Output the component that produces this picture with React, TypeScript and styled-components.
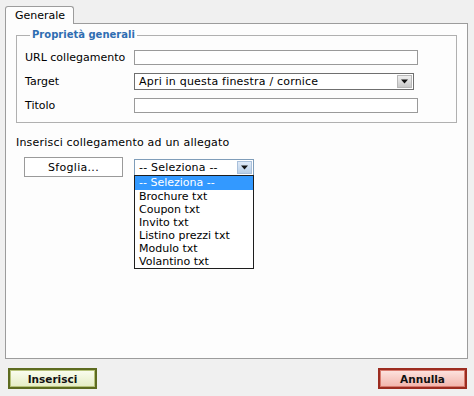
import React from "react";
import styled, { createGlobalStyle } from "styled-components";

const Global = createGlobalStyle`
  html, body { margin: 0; padding: 0; background: #f0f0f0; }
  body { font-family: "DejaVu Sans", Verdana, sans-serif; font-size: 11px; color: #000; }
  * { box-sizing: border-box; }
`;

const Page = styled.div`
  width: 474px;
  height: 396px;
  padding: 6px 6px 0 5px;
  display: flex;
  flex-direction: column;
`;

const TabBar = styled.div`
  display: flex;
  height: 17px;
`;

const Tab = styled.div`
  width: 69px;
  height: 18px;
  padding: 2px 0 0 9px;
  background: #fdfdfd;
  border: 1px solid #9c9c9c;
  border-bottom: none;
  border-radius: 3px 3px 0 0;
  position: relative;
  z-index: 1;
  line-height: 14px;
`;

const Panel = styled.div`
  height: 336px;
  border: 1px solid #9c9c9c;
  background: #fdfdfd;
  padding: 4px 10px 0 10px;
  position: relative;
`;

const Fieldset = styled.fieldset`
  margin: 0;
  border: 1px solid #b0b0b0;
  padding: 3px 8px 5px 8px;
  width: 441px;
`;

const Legend = styled.legend`
  margin-left: 5px;
  padding: 0 2px;
  font-weight: bold;
  color: #2f6db2;
  line-height: 14px;
  font-size: 10px;
`;

const FormGrid = styled.div`
  display: grid;
  grid-template-columns: 109px 1fr;
  grid-auto-rows: 24px;
  align-items: center;
`;

const Label = styled.label`
  line-height: 13px;
`;

const TextInput = styled.input`
  width: 284px;
  height: 15px;
  border: 1px solid #9a9a9a;
  background: #fff;
  padding: 0 3px;
  font: inherit;
`;

const SelectBox = styled.div<{ $w: number; $open?: boolean }>`
  width: ${(p) => p.$w}px;
  height: 17px;
  border: 1px solid ${(p) => (p.$open ? "#7f9db9" : "#6f6f6f")};
  background: #fff;
  display: flex;
  align-items: center;
  padding-left: 4px;
  line-height: 13px;
  position: relative;
  letter-spacing: 0.2px;
`;

const SelectText = styled.span`
  flex: 1;
  white-space: nowrap;
`;

const ArrowBtn = styled.span<{ $open?: boolean }>`
  width: 15px;
  height: 13px;
  margin-right: 1px;
  border: 1px solid ${(p) => (p.$open ? "#a9c0db" : "#b8b8b8")};
  background: ${(p) =>
    p.$open
      ? "linear-gradient(#dfeaf7, #b9cfe8)"
      : "linear-gradient(#efefef, #c9c9c9)"};
  display: flex;
  align-items: center;
  justify-content: center;
`;

const Section = styled.div`
  margin-top: 13px;
  line-height: 14px;
  letter-spacing: 0.2px;
`;

const AttachRow = styled.div`
  display: flex;
  align-items: center;
  margin-top: 7px;
  padding-left: 8px;
  gap: 11px;
`;

const Browse = styled.div`
  width: 99px;
  height: 20px;
  border: 1px solid #9a9a9a;
  background: #fff;
  display: flex;
  align-items: center;
  justify-content: center;
  letter-spacing: 0.3px;
`;

const SelectWrap = styled.div`
  position: relative;
`;

const DropList = styled.ul`
  position: absolute;
  top: 16px;
  left: 0;
  width: 120px;
  margin: 0;
  padding: 0;
  list-style: none;
  border: 1px solid #1e1e1e;
  background: #fff;
  z-index: 5;
`;

const Option = styled.li<{ $active?: boolean }>`
  height: 13px;
  line-height: 13px;
  padding-left: 4px;
  white-space: nowrap;
  background: ${(p) => (p.$active ? "#3399ff" : "transparent")};
  color: ${(p) => (p.$active ? "#fff" : "#000")};
  &:first-child { height: 14px; line-height: 14px; }
`;

const Footer = styled.div`
  display: flex;
  justify-content: space-between;
  padding: 9px 1px 0 3px;
`;

const ActionBtn = styled.button<{ $tone: "ok" | "cancel" }>`
  width: 89px;
  height: 21px;
  font: inherit;
  font-size: 10.5px;
  font-weight: bold;
  color: #111;
  padding: 0;
  border: 2px solid ${(p) => (p.$tone === "ok" ? "#5d6b20" : "#9c2c20")};
  box-shadow: inset 0 0 0 1px ${(p) => (p.$tone === "ok" ? "#b6c27a" : "#d77a6e")};
  background: ${(p) =>
    p.$tone === "ok"
      ? "linear-gradient(#fbfdf0, #e4ecc4)"
      : "linear-gradient(#fde4e0, #f2b3aa)"};
`;

const Arrow = () => (
  <svg width="7" height="5" viewBox="0 0 7 5">
    <path d="M0 0.5h7L3.5 4.5z" fill="#111" />
  </svg>
);

const options = [
  "-- Seleziona --",
  "Brochure txt",
  "Coupon txt",
  "Invito txt",
  "Listino prezzi txt",
  "Modulo txt",
  "Volantino txt",
];

export default function App() {
  return (
    <Page>
      <Global />
      <TabBar>
        <Tab>Generale</Tab>
      </TabBar>
      <Panel>
        <Fieldset>
          <Legend>Proprietà generali</Legend>
          <FormGrid>
            <Label>URL collegamento</Label>
            <TextInput />
            <Label>Target</Label>
            <SelectBox $w={280}>
              <SelectText>Apri in questa finestra / cornice</SelectText>
              <ArrowBtn>
                <Arrow />
              </ArrowBtn>
            </SelectBox>
            <Label>Titolo</Label>
            <TextInput />
          </FormGrid>
        </Fieldset>
        <Section>Inserisci collegamento ad un allegato</Section>
        <AttachRow>
          <Browse>Sfoglia...</Browse>
          <SelectWrap>
            <SelectBox $w={120} $open>
              <SelectText>-- Seleziona --</SelectText>
              <ArrowBtn $open>
                <Arrow />
              </ArrowBtn>
            </SelectBox>
            <DropList>
              {options.map((o, i) => (
                <Option key={o} $active={i === 0}>
                  {o}
                </Option>
              ))}
            </DropList>
          </SelectWrap>
        </AttachRow>
      </Panel>
      <Footer>
        <ActionBtn $tone="ok">Inserisci</ActionBtn>
        <ActionBtn $tone="cancel">Annulla</ActionBtn>
      </Footer>
    </Page>
  );
}
